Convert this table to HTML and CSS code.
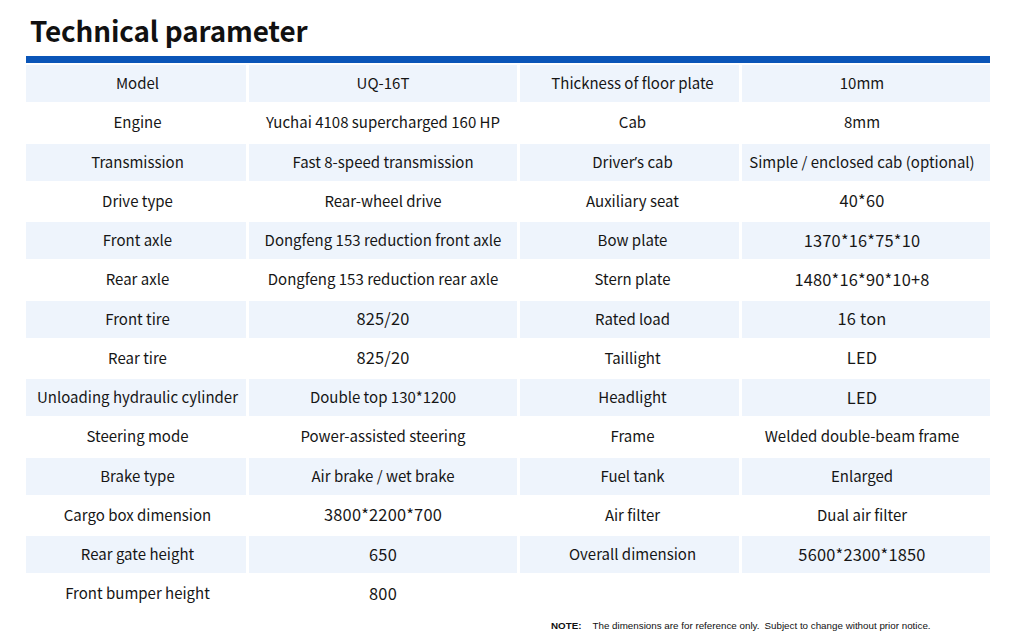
FILE: index.html
```html
<!DOCTYPE html>
<html lang="en">
<head>
<meta charset="utf-8">
<link rel="stylesheet" href="styles.css">
</head>
<body>
<div class="page">
  <h1 class="title">Technical parameter</h1>
  <div class="bar"></div>
  <div class="specs">
    <div class="cell c1 s">Model</div><div class="cell c2 s">UQ-16T</div><div class="cell c3 s">Thickness of floor plate</div><div class="cell c4 s">10mm</div>
    <div class="cell c1">Engine</div><div class="cell c2">Yuchai 4108 supercharged 160 HP</div><div class="cell c3">Cab</div><div class="cell c4">8mm</div>
    <div class="cell c1 s">Transmission</div><div class="cell c2 s">Fast 8-speed transmission</div><div class="cell c3 s">Driver<span class="apos">’</span>s cab</div><div class="cell c4 s">Simple / enclosed cab (optional)</div>
    <div class="cell c1">Drive type</div><div class="cell c2">Rear-wheel drive</div><div class="cell c3">Auxiliary seat</div><div class="cell c4 num">40*60</div>
    <div class="cell c1 s">Front axle</div><div class="cell c2 s">Dongfeng 153 reduction front axle</div><div class="cell c3 s">Bow plate</div><div class="cell c4 s num">1370*16*75*10</div>
    <div class="cell c1">Rear axle</div><div class="cell c2">Dongfeng 153 reduction rear axle</div><div class="cell c3">Stern plate</div><div class="cell c4 num">1480*16*90*10+8</div>
    <div class="cell c1 s">Front tire</div><div class="cell c2 s num">825/20</div><div class="cell c3 s">Rated load</div><div class="cell c4 s num">16 ton</div>
    <div class="cell c1">Rear tire</div><div class="cell c2 num">825/20</div><div class="cell c3">Taillight</div><div class="cell c4 num">LED</div>
    <div class="cell c1 s">Unloading hydraulic cylinder</div><div class="cell c2 s">Double top 130*1200</div><div class="cell c3 s">Headlight</div><div class="cell c4 s num">LED</div>
    <div class="cell c1">Steering mode</div><div class="cell c2">Power-assisted steering</div><div class="cell c3">Frame</div><div class="cell c4">Welded double-beam frame</div>
    <div class="cell c1 s">Brake type</div><div class="cell c2 s">Air brake / wet brake</div><div class="cell c3 s">Fuel tank</div><div class="cell c4 s">Enlarged</div>
    <div class="cell c1">Cargo box dimension</div><div class="cell c2 num">3800*2200*700</div><div class="cell c3">Air filter</div><div class="cell c4">Dual air filter</div>
    <div class="cell c1 s">Rear gate height</div><div class="cell c2 s num">650</div><div class="cell c3 s">Overall dimension</div><div class="cell c4 s num">5600*2300*1850</div>
    <div class="cell c1">Front bumper height</div><div class="cell c2 num">800</div><div class="cell c3"></div><div class="cell c4"></div>
  </div>
  <p class="note"><b>NOTE:</b><span class="note-a">The dimensions are for reference only.</span><span class="note-b">Subject to change without prior notice.</span></p>
</div>
</body>
</html>
```

FILE: styles.css
```css
html, body {
  margin: 0;
  padding: 0;
  background: #ffffff;
}
.page {
  width: 1024px;
  height: 639px;
  overflow: hidden;
  padding: 0 34px 0 26px;
  box-sizing: border-box;
  font-family: "Noto Sans CJK SC", "Noto Sans", sans-serif;
  color: #161616;
}
.title {
  margin: 0;
  padding: 12px 0 0 4px;
  height: 56px;
  box-sizing: border-box;
  font-size: 27.8px;
  line-height: 36px;
  font-weight: 700;
  color: #111111;
  letter-spacing: -0.1px;
}
.bar {
  height: 7px;
  background: #0a55b8;
}
.specs {
  display: grid;
  grid-template-columns: 220px 268px 219px 248px;
  grid-auto-rows: 37.25px;
  column-gap: 3px;
  row-gap: 2px;
  padding-top: 2px;
}
.cell {
  display: flex;
  align-items: center;
  justify-content: center;
  padding-bottom: 2px;
  box-sizing: border-box;
  font-size: 15px;
  font-weight: 400;
  white-space: nowrap;
}
.cell.c1 {
  padding-left: 3px;
}
.cell.c3 {
  padding-left: 6px;
}
.cell.c4 {
  padding-right: 8px;
}
.cell.s {
  background: #eef4fc;
}
.cell.num {
  font-size: 16.4px;
  letter-spacing: 0.2px;
}
.apos {
  font-family: "Noto Sans", sans-serif;
}
.note {
  margin: 7px 0 0 525px;
  font-family: "Liberation Sans", Arial, sans-serif;
  font-size: 9.8px;
  color: #111111;
  white-space: nowrap;
}
.note b {
  margin-right: 11px;
}
.note-a {
  margin-right: 5px;
}
```
